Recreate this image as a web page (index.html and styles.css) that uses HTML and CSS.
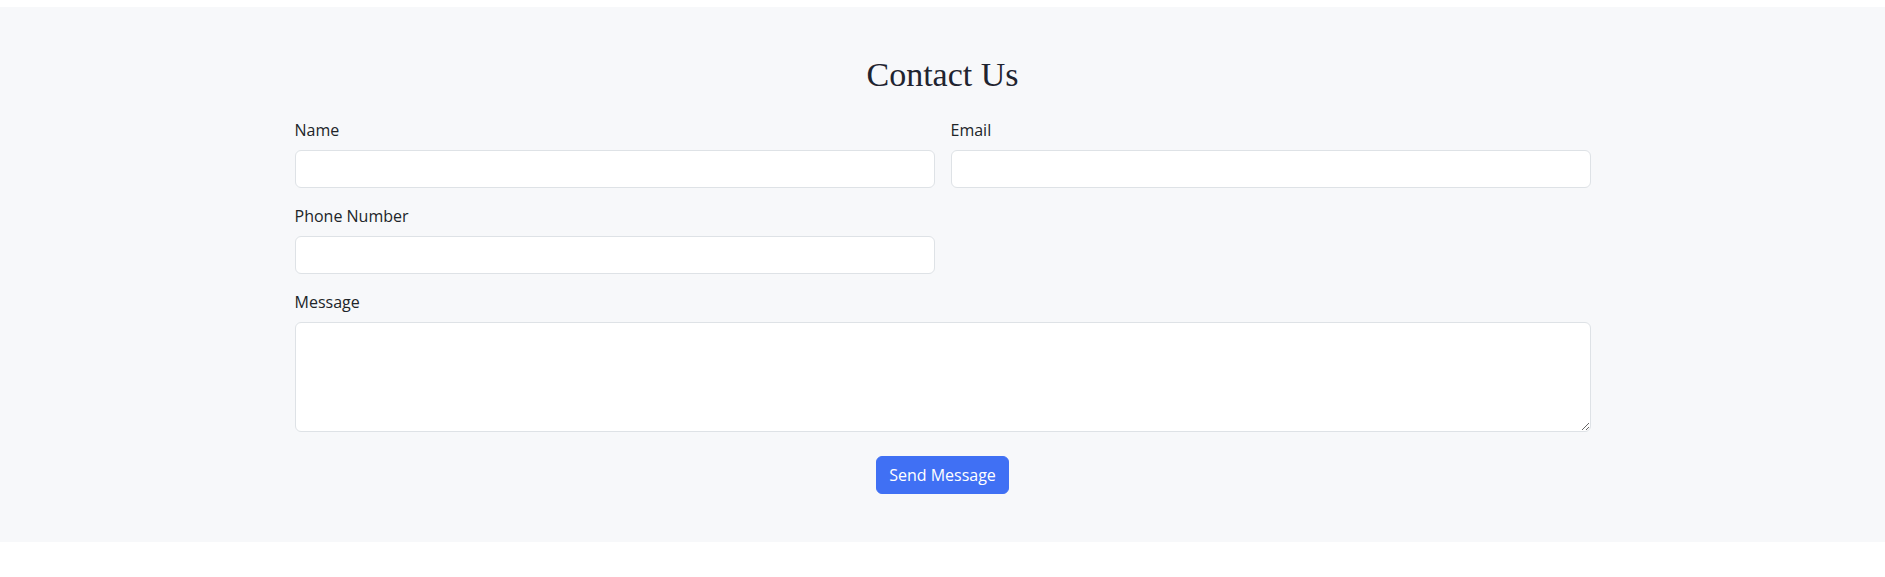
FILE: index.html
```html
<!DOCTYPE html>
<html lang="en">
<head>
<meta charset="utf-8">
<title>Contact Us</title>
<link rel="stylesheet" href="styles.css">
</head>
<body>
<section class="contact">
  <div class="container">
    <h2 class="title">Contact Us</h2>
    <form class="form">
      <div class="field">
        <label class="label" for="name">Name</label>
        <input class="control" id="name" type="text">
      </div>
      <div class="field">
        <label class="label" for="email">Email</label>
        <input class="control" id="email" type="email">
      </div>
      <div class="field">
        <label class="label" for="phone">Phone Number</label>
        <input class="control" id="phone" type="tel">
      </div>
      <div class="field full">
        <label class="label" for="message">Message</label>
        <textarea class="control area" id="message" rows="4"></textarea>
      </div>
      <div class="actions full">
        <button class="btn" type="button">Send Message</button>
      </div>
    </form>
  </div>
</section>
</body>
</html>
```

FILE: styles.css
```css
* { box-sizing: border-box; }
html, body { margin: 0; padding: 0; background: #fff; }
body {
  font-family: "Open Sans", "Noto Sans", sans-serif;
  font-size: 16px;
  line-height: 1.5;
  color: #212529;
  padding-top: 7px;
}
.contact {
  background: #f7f8fa;
  padding: 48px 0 48px;
}
.container {
  max-width: 1320px;
  margin: 0 auto;
  padding: 0 12px;
}
.title {
  margin: 0 0 24px;
  text-align: center;
  font-family: "Liberation Serif", "DejaVu Serif", serif;
  font-weight: 400;
  font-size: 34px;
  line-height: 39px;
  color: #1f2430;
}
.form {
  display: grid;
  grid-template-columns: 1fr 1fr;
  column-gap: 16px;
  row-gap: 16px;
}
.field { display: flex; flex-direction: column; }
.full { grid-column: 1 / -1; }
.label {
  display: block;
  margin-bottom: 8px;
  line-height: 24px;
}
.control {
  display: block;
  width: 100%;
  height: 38px;
  padding: 6px 12px;
  font: inherit;
  color: #212529;
  background: #fff;
  border: 1px solid #dee2e6;
  border-radius: 6px;
  outline: none;
}
.area {
  height: 110px;
  resize: vertical;
}
.actions {
  display: flex;
  justify-content: center;
  margin-top: 8px;
}
.btn {
  font: inherit;
  line-height: 24px;
  padding: 6px 12px;
  color: #fff;
  background: #4070f4;
  border: 1px solid #4070f4;
  border-radius: 6px;
  cursor: pointer;
}
```
